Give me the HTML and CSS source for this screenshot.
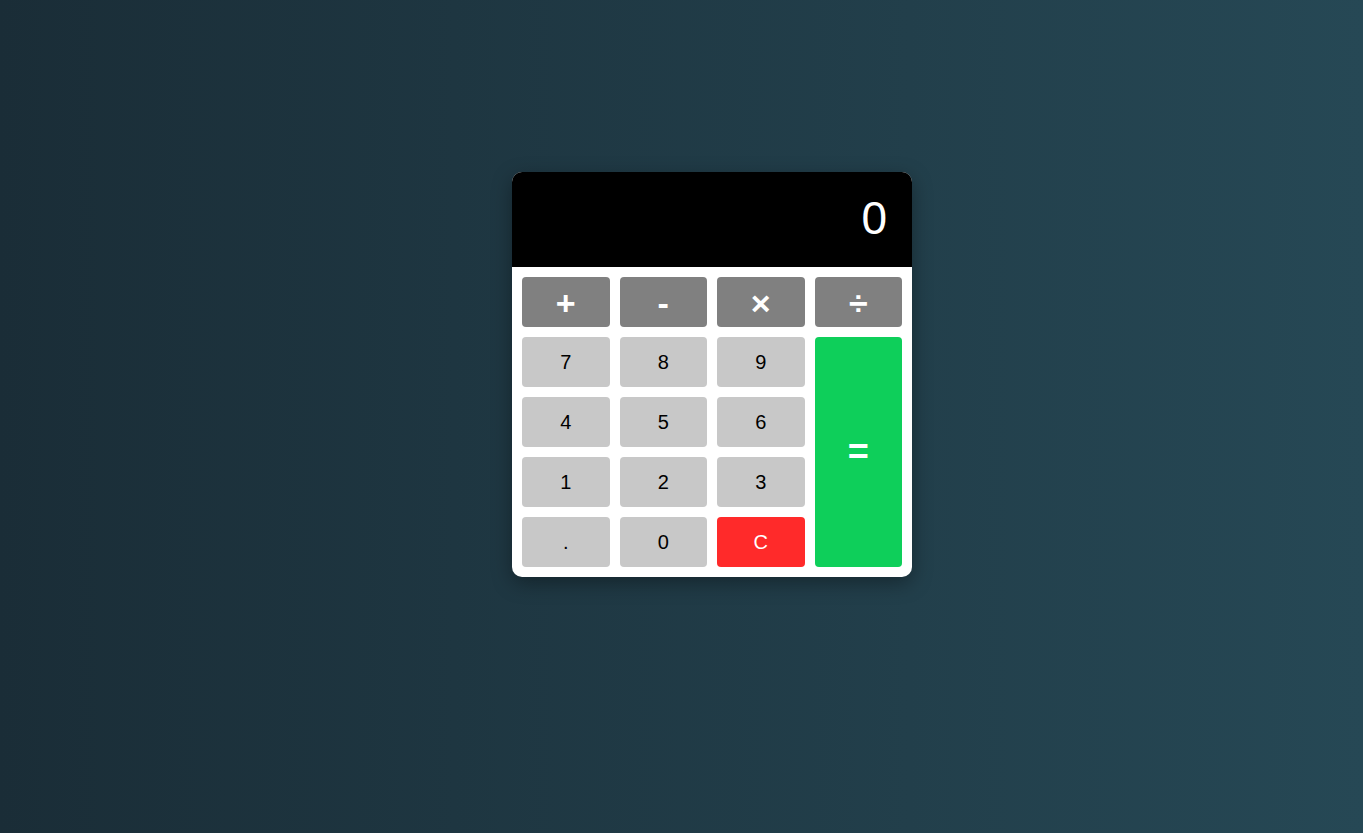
FILE: index.html
```html
<!DOCTYPE html>
<html>
<head>
<meta charset="utf-8">
<link rel="stylesheet" href="styles.css">
</head>
<body>
<div class="calc">
  <div class="display">0</div>
  <div class="keys">
    <button class="key op">+</button>
    <button class="key op">-</button>
    <button class="key op">×</button>
    <button class="key op">÷</button>
    <button class="key">7</button>
    <button class="key">8</button>
    <button class="key">9</button>
    <button class="key eq">=</button>
    <button class="key">4</button>
    <button class="key">5</button>
    <button class="key">6</button>
    <button class="key">1</button>
    <button class="key">2</button>
    <button class="key">3</button>
    <button class="key">.</button>
    <button class="key">0</button>
    <button class="key clear">C</button>
  </div>
</div>
</body>
</html>
```
FILE: styles.css
```css
html, body {
  margin: 0;
  height: 100%;
}
body {
  background: linear-gradient(to right, #1a2d37, #264855);
  font-family: "Liberation Sans", Arial, sans-serif;
  padding: 172px 0 0 512px;
  box-sizing: border-box;
}
.calc {
  width: 400px;
  background: #fff;
  border-radius: 10px;
  overflow: hidden;
  box-shadow: 0 6px 20px rgba(0, 0, 0, 0.35);
}
.display {
  height: 95px;
  background: #000;
  color: #fff;
  font-size: 46px;
  text-align: right;
  padding: 0 25px;
  line-height: 92px;
  box-sizing: border-box;
}
.keys {
  display: grid;
  grid-template-columns: repeat(4, 1fr);
  grid-auto-rows: 50px;
  gap: 10px;
  padding: 10px;
}
.key {
  border: none;
  border-radius: 4px;
  background: #c8c8c8;
  color: #000;
  font-family: "Liberation Sans", Arial, sans-serif;
  font-size: 20px;
  padding: 0;
  margin: 0;
}
.op {
  background: #808080;
  color: #fff;
  font-size: 34px;
  font-weight: bold;
  padding-top: 2px;
}
.eq {
  grid-column: 4;
  grid-row: 2 / span 4;
  background: #0ecf5a;
  color: #fff;
  font-size: 36px;
  font-weight: bold;
}
.clear {
  background: #ff2a2a;
  color: #fff;
}
```
